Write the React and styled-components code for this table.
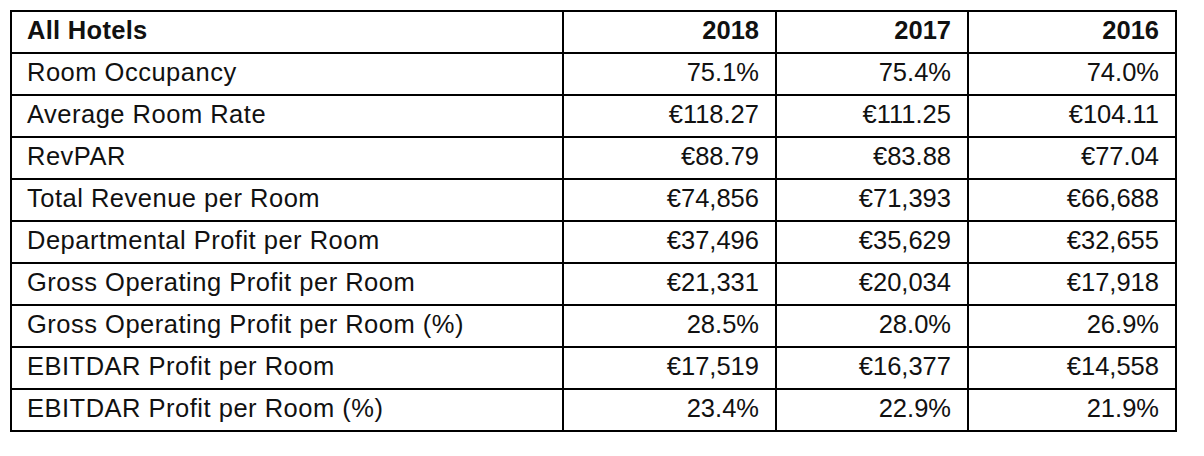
import React from "react";
import styled, { createGlobalStyle } from "styled-components";

const Global = createGlobalStyle`
  html, body { margin: 0; padding: 0; background: #fff; }
  body { padding: 10px; font-family: "Liberation Sans", Arial, sans-serif; }
`;

const Table = styled.table`
  border-collapse: collapse;
  table-layout: fixed;
  width: 1167px;
  font-family: "Liberation Sans", Arial, sans-serif;
  font-size: 25.5px;
  color: #111;
`;

const Col = styled.col`
  width: ${(p) => p.$w}px;
`;

const Cell = styled.td`
  border: 2px solid #000;
  height: 42px;
  padding: 0 ${(p) => (p.$num ? "16px" : "15px")} 2px;
  text-align: ${(p) => (p.$num ? "right" : "left")};
  font-weight: ${(p) => (p.$head ? "bold" : "normal")};
  letter-spacing: ${(p) => (p.$num ? "0" : p.$head ? "0.3px" : "0.5px")};
  white-space: nowrap;
  box-sizing: border-box;
  line-height: 1;
`;

const HeadCell = styled(Cell).attrs({ as: "th", $head: true })``;

const widths = [552, 213, 192, 208];
const years = ["2018", "2017", "2016"];
const rows = [
  ["Room Occupancy", "75.1%", "75.4%", "74.0%"],
  ["Average Room Rate", "€118.27", "€111.25", "€104.11"],
  ["RevPAR", "€88.79", "€83.88", "€77.04"],
  ["Total Revenue per Room", "€74,856", "€71,393", "€66,688"],
  ["Departmental Profit per Room", "€37,496", "€35,629", "€32,655"],
  ["Gross Operating Profit per Room", "€21,331", "€20,034", "€17,918"],
  ["Gross Operating Profit per Room (%)", "28.5%", "28.0%", "26.9%"],
  ["EBITDAR Profit per Room", "€17,519", "€16,377", "€14,558"],
  ["EBITDAR Profit per Room (%)", "23.4%", "22.9%", "21.9%"],
];

export default function App() {
  return (
    <>
      <Global />
      <Table>
        <colgroup>
          {widths.map((w, i) => (
            <Col key={i} $w={w} />
          ))}
        </colgroup>
        <thead>
          <tr>
            <HeadCell>All Hotels</HeadCell>
            {years.map((y) => (
              <HeadCell key={y} $num>{y}</HeadCell>
            ))}
          </tr>
        </thead>
        <tbody>
          {rows.map((r) => (
            <tr key={r[0]}>
              <Cell>{r[0]}</Cell>
              {r.slice(1).map((v, i) => (
                <Cell key={i} $num>{v}</Cell>
              ))}
            </tr>
          ))}
        </tbody>
      </Table>
    </>
  );
}
